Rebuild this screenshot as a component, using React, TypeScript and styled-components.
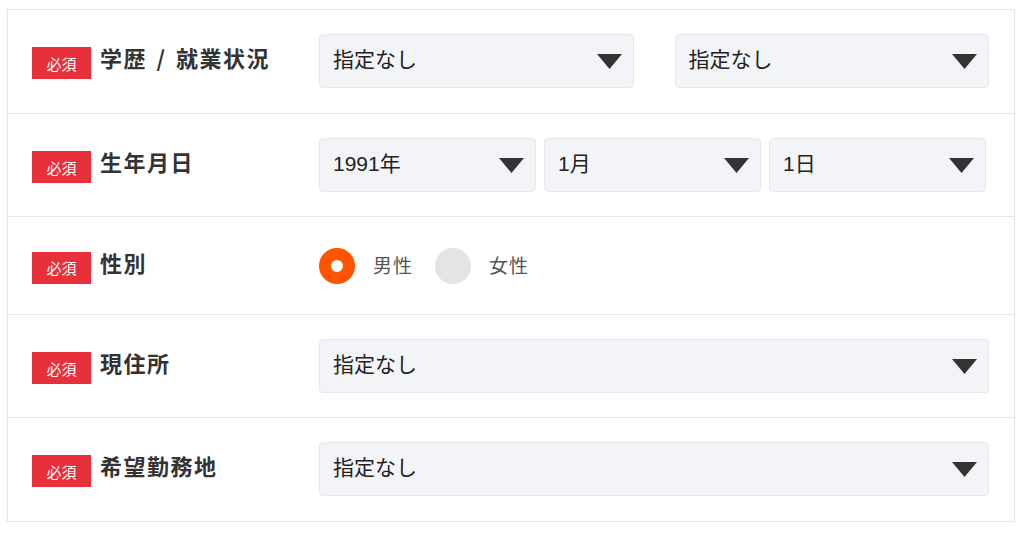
import React, { useState } from "react";
import styled, { createGlobalStyle } from "styled-components";

const GlobalStyle = createGlobalStyle`
  body {
    margin: 0;
    background: #fff;
    font-family: "Noto Sans CJK JP", "Noto Sans", sans-serif;
  }
`;

type Option = { value: string };

const Form = styled.div`
  width: 1008px;
  margin: 9px 0 0 7px;
  border: 1px solid #e4e6ea;
  box-sizing: border-box;
  background: #fff;
`;

const Row = styled.div<{ $pb: number }>`
  display: flex;
  align-items: center;
  padding: 24px 24px ${(p) => p.$pb}px;
  border-top: 1px solid #e4e6ea;
  &:first-child {
    border-top: none;
  }
`;

const Head = styled.div`
  width: 287px;
  flex-shrink: 0;
  display: flex;
  align-items: flex-start;
  gap: 9px;
`;

const Badge = styled.span`
  display: inline-flex;
  align-items: center;
  justify-content: center;
  width: 59px;
  height: 32px;
  margin-top: 4px;
  background: #e8303a;
  color: #fff;
  font-size: 15px;
`;

const Label = styled.span`
  font-size: 22px;
  line-height: 32px;
  font-weight: 700;
  color: #333;
  letter-spacing: 1.5px;
  word-spacing: 3px;
  margin-top: -2px;
`;

const Fields = styled.div<{ $cols: number; $gap: number; $trim: number }>`
  flex: 1;
  display: grid;
  grid-template-columns: repeat(${(p) => p.$cols}, 1fr);
  gap: ${(p) => p.$gap}px;
  margin-right: ${(p) => p.$trim}px;
`;

const SelectBox = styled.div`
  height: 54px;
  box-sizing: border-box;
  display: flex;
  align-items: center;
  justify-content: space-between;
  padding: 0 11px 0 13px;
  background: #f3f4f7;
  border: 1px solid #e6e8ec;
  border-radius: 4px;
  font-family: "Liberation Sans", "Noto Sans CJK JP", sans-serif;
  font-size: 21px;
  color: #222;
`;

const SelectText = styled.span`
  line-height: 1;
  margin-top: -4px;
`;

const Radios = styled.div`
  flex: 1;
  display: flex;
  align-items: center;
  height: 49px;
`;

const RadioItem = styled.label`
  display: flex;
  align-items: center;
  margin-right: 22px;
  cursor: pointer;
`;

const Dot = styled.span<{ $on: boolean }>`
  width: 36px;
  height: 36px;
  border-radius: 50%;
  box-sizing: border-box;
  background: ${(p) => (p.$on ? "#fff" : "#e4e4e4")};
  border: ${(p) => (p.$on ? "12px solid #ff5400" : "none")};
  margin-right: 18px;
`;

const RadioText = styled.span`
  font-size: 19px;
  color: #555;
  letter-spacing: 1px;
  margin-top: -2px;
`;

function Arrow() {
  return (
    <svg width="25" height="15" viewBox="0 0 25 15">
      <polygon points="0,0 25,0 12.5,15" fill="#333" />
    </svg>
  );
}

function Select({ value }: Option) {
  return (
    <SelectBox>
      <SelectText>{value}</SelectText>
      <Arrow />
    </SelectBox>
  );
}

function Required({ children }: { children: React.ReactNode }) {
  return (
    <Head>
      <Badge>必須</Badge>
      <Label>{children}</Label>
    </Head>
  );
}

export default function App() {
  const [sex, setSex] = useState("male");
  return (
    <>
      <GlobalStyle />
      <Form>
        <Row $pb={25}>
          <Required>学歴 / 就業状況</Required>
          <Fields $cols={2} $gap={41} $trim={1}>
            <Select value="指定なし" />
            <Select value="指定なし" />
          </Fields>
        </Row>
        <Row $pb={24}>
          <Required>生年月日</Required>
          <Fields $cols={3} $gap={8} $trim={4}>
            <Select value="1991年" />
            <Select value="1月" />
            <Select value="1日" />
          </Fields>
        </Row>
        <Row $pb={24}>
          <Required>性別</Required>
          <Radios>
            <RadioItem onClick={() => setSex("male")}>
              <Dot $on={sex === "male"} />
              <RadioText>男性</RadioText>
            </RadioItem>
            <RadioItem onClick={() => setSex("female")}>
              <Dot $on={sex === "female"} />
              <RadioText>女性</RadioText>
            </RadioItem>
          </Radios>
        </Row>
        <Row $pb={24}>
          <Required>現住所</Required>
          <Fields $cols={1} $gap={0} $trim={1}>
            <Select value="指定なし" />
          </Fields>
        </Row>
        <Row $pb={25}>
          <Required>希望勤務地</Required>
          <Fields $cols={1} $gap={0} $trim={1}>
            <Select value="指定なし" />
          </Fields>
        </Row>
      </Form>
    </>
  );
}
